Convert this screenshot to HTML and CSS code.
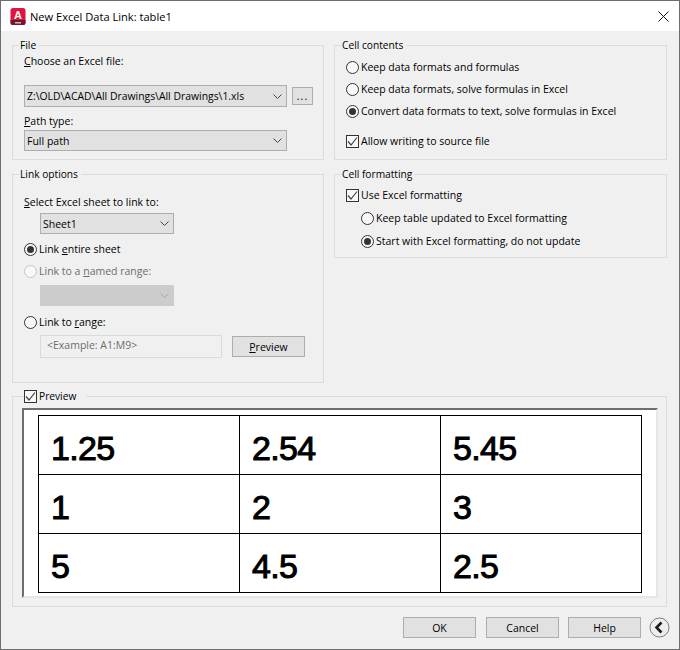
FILE: index.html
```html
<!DOCTYPE html>
<html lang="en">
<head>
  <meta charset="UTF-8">
  <title>New Excel Data Link: table1</title>
  <link rel="stylesheet" href="styles.css">
</head>
<body>
  <div class="window">
    <div class="titlebar">
      <svg class="app-icon" width="16" height="17" viewBox="0 0 16 17">
        <rect x="0.5" y="0" width="15" height="17" rx="2.5" fill="#e0143c"/>
        <path d="M0.5 12H15.5V14.5A2.5 2.5 0 0 1 13 17H3A2.5 2.5 0 0 1 0.5 14.5Z" fill="#6e1a2c"/>
        <rect x="5" y="14" width="6" height="1.5" fill="#d8b4bd"/>
        <text x="8" y="10.5" text-anchor="middle" class="app-letter">A</text>
      </svg>
      <span class="title">New Excel Data Link: table1</span>
      <svg class="close" width="11" height="11" viewBox="0 0 11 11">
        <path d="M0.5 0.5L10.5 10.5M10.5 0.5L0.5 10.5" stroke="#111" fill="none"/>
      </svg>
    </div>

    <div class="columns">
      <div class="stack">
        <fieldset class="group file-group">
          <legend>File</legend>
          <div class="label"><u>C</u>hoose an Excel file:</div>
          <div class="file-row">
            <div class="select file-select">
              <span>Z:\OLD\ACAD\All Drawings\All Drawings\1.xls</span>
              <svg class="chev" width="9" height="5" viewBox="0 0 9 5"><path d="M0.5 0.5L4.5 4.5L8.5 0.5" fill="none" stroke="#444"/></svg>
            </div>
            <div class="button dots">...</div>
          </div>
          <div class="label path-label"><u>P</u>ath type:</div>
          <div class="select path-select">
            <span>Full path</span>
            <svg class="chev" width="9" height="5" viewBox="0 0 9 5"><path d="M0.5 0.5L4.5 4.5L8.5 0.5" fill="none" stroke="#444"/></svg>
          </div>
        </fieldset>

        <fieldset class="group link-group">
          <legend>Link options</legend>
          <div class="label sheet-label"><u>S</u>elect Excel sheet to link to:</div>
          <div class="select sheet-select">
            <span>Sheet1</span>
            <svg class="chev" width="9" height="5" viewBox="0 0 9 5"><path d="M0.5 0.5L4.5 4.5L8.5 0.5" fill="none" stroke="#444"/></svg>
          </div>
          <div class="option link-entire"><span class="radio on"></span><span>Link <u>e</u>ntire sheet</span></div>
          <div class="option link-named disabled"><span class="radio"></span><span>Link to a <u>n</u>amed range:</span></div>
          <div class="select sheet-select named-select">
            <span></span>
            <svg class="chev" width="9" height="5" viewBox="0 0 9 5"><path d="M0.5 0.5L4.5 4.5L8.5 0.5" fill="none" stroke="#a8a8a8"/></svg>
          </div>
          <div class="option link-range"><span class="radio"></span><span>Link to <u>r</u>ange:</span></div>
          <div class="range-row">
            <div class="range-input">&lt;Example: A1:M9&gt;</div>
            <div class="button preview-btn"><span><u>P</u>review</span></div>
          </div>
        </fieldset>
      </div>

      <div class="stack">
        <fieldset class="group contents-group">
          <legend>Cell contents</legend>
          <div class="option"><span class="radio"></span><span>Keep data formats and formulas</span></div>
          <div class="option"><span class="radio"></span><span>Keep data formats, solve formulas in Excel</span></div>
          <div class="option"><span class="radio on"></span><span>Convert data formats to text, solve formulas in Excel</span></div>
          <div class="option allow-write">
            <span class="check"><svg width="11" height="11" viewBox="0 0 11 11"><path d="M1 5.5L4 9L10 1.5" fill="none" stroke="#444" stroke-width="1.2"/></svg></span>
            <span>Allow writing to source file</span>
          </div>
        </fieldset>

        <fieldset class="group format-group">
          <legend>Cell formatting</legend>
          <div class="option use-excel">
            <span class="check"><svg width="11" height="11" viewBox="0 0 11 11"><path d="M1 5.5L4 9L10 1.5" fill="none" stroke="#444" stroke-width="1.2"/></svg></span>
            <span>Use Excel formatting</span>
          </div>
          <div class="option sub-option"><span class="radio"></span><span>Keep table updated to Excel formatting</span></div>
          <div class="option sub-option"><span class="radio on"></span><span>Start with Excel formatting, do not update</span></div>
        </fieldset>
      </div>
    </div>

    <fieldset class="group preview-group">
      <legend>
        <span class="check"><svg width="11" height="11" viewBox="0 0 11 11"><path d="M1 5.5L4 9L10 1.5" fill="none" stroke="#444" stroke-width="1.2"/></svg></span>
        <span>Preview</span>
      </legend>
      <div class="preview-box">
        <div class="sheet">
          <div class="cell">1.25</div>
          <div class="cell">2.54</div>
          <div class="cell">5.45</div>
          <div class="cell">1</div>
          <div class="cell">2</div>
          <div class="cell">3</div>
          <div class="cell">5</div>
          <div class="cell">4.5</div>
          <div class="cell">2.5</div>
        </div>
      </div>
    </fieldset>

    <div class="footer">
      <div class="button action">OK</div>
      <div class="button action cancel">Cancel</div>
      <div class="button action help">Help</div>
      <svg class="collapse" width="21" height="21" viewBox="0 0 21 21">
        <circle cx="10.5" cy="10.5" r="9.5" fill="#eeeeee" stroke="#7d7d7d"/>
        <path d="M12.5 5.5L7.5 10.5L12.5 15.5" fill="none" stroke="#1c1c1c" stroke-width="2.6"/>
      </svg>
    </div>
  </div>
</body>
</html>
```

FILE: styles.css
```css
* {
  box-sizing: border-box;
}
body {
  margin: 0;
  font-family: "Open Sans", sans-serif;
  font-size: 10.5px;
  color: #000;
  background: #f0f0f0;
}
.window {
  width: 680px;
  height: 650px;
  border: 1px solid #6e6e6e;
  background: #f0f0f0;
}
.titlebar {
  height: 30px;
  background: white;
  display: flex;
  align-items: center;
  padding-left: 9px;
}
.app-icon {
  margin-right: 4px;
}
.app-letter {
  font-family: "Liberation Sans", sans-serif;
  font-size: 11px;
  font-weight: bold;
  fill: white;
}
.title {
  font-size: 11.1px;
}
.close {
  margin-left: auto;
  margin-right: 10px;
}
.columns {
  display: grid;
  grid-template-columns: 312px 333px;
  gap: 10px;
  padding: 7px 0 0 11px;
}
.stack {
  display: flex;
  flex-direction: column;
  gap: 7px;
}
.group {
  margin: 0;
  min-width: 0;
  border: 1px solid #dcdcdc;
  padding: 0 0 0 11px;
}
.group legend {
  height: 15px;
  line-height: 15px;
  font-size: 10.2px;
  margin-left: -5px;
  padding: 0 3px 0 1px;
}
.file-group, .contents-group {
  height: 122px;
}
.link-group {
  height: 216px;
}
.format-group {
  height: 91px;
}

.label {
  height: 16px;
  line-height: 16px;
}
.file-row {
  display: flex;
  align-items: center;
  gap: 5px;
  margin-top: 16px;
}
.path-label {
  margin-top: 6px;
}
.sheet-label {
  margin-top: 12px;
}

.select {
  height: 21px;
  background: #e1e1e1;
  border: 1px solid #adadad;
  display: flex;
  align-items: center;
  justify-content: space-between;
  padding: 0 4px 0 2px;
  width: 263px;
}
.file-select {
  height: 22px;
  font-size: 10.4px;
}
.path-select {
  margin-top: 1px;
}
.sheet-select {
  width: 134px;
  margin: 3px 0 0 16px;
}
.named-select {
  margin-top: 6px;
  background: #cccccc;
  border-color: #cccccc;
}

.button {
  background: #e1e1e1;
  border: 1px solid #adadad;
  height: 21px;
  display: flex;
  align-items: center;
  justify-content: center;
}
.dots {
  width: 21px;
  height: 18px;
  letter-spacing: 1px;
}
.action {
  width: 73px;
}

.option {
  height: 16px;
  line-height: 16px;
  display: flex;
  align-items: center;
  margin-top: 6px;
}
.disabled {
  color: #6d6d6d;
}
.link-entire {
  margin-top: 7px;
}
.link-range {
  margin-top: 8px;
}
.allow-write {
  margin-top: 14px;
}
.use-excel {
  margin-top: 5px;
}
.sub-option {
  margin: 7px 0 0 15px;
}
.radio {
  width: 13px;
  height: 13px;
  border: 1px solid #333;
  border-radius: 50%;
  margin-right: 2px;
  flex: none;
  background: #f8f8f8;
  position: relative;
}
.disabled .radio {
  border-color: #c4c4c4;
}
.radio.on::after {
  content: "";
  position: absolute;
  left: 2px;
  top: 2px;
  width: 7px;
  height: 7px;
  border-radius: 50%;
  background: #333;
}
.check {
  width: 13px;
  height: 13px;
  border: 1px solid #333;
  margin-right: 2px;
  flex: none;
  background: #f8f8f8;
  display: inline-flex;
}
.range-row {
  display: flex;
  align-items: center;
  margin: 5px 0 0 16px;
}
.range-input {
  width: 182px;
  height: 23px;
  line-height: 19px;
  padding-left: 6px;
  border: 1px solid #dadada;
  color: #6d6d6d;
}
.preview-btn {
  width: 73px;
  margin-left: 10px;
}

.preview-group {
  width: 655px;
  height: 218px;
  margin: 6px 0 0 11px;
  padding-left: 9px;
}
.preview-group legend {
  display: flex;
  align-items: center;
  margin-left: 2px;
  padding: 0 10px 0 0;
}
.preview-box {
  width: 636px;
  height: 190px;
  margin-top: 4px;
  background: white;
  border-style: solid;
  border-width: 2px;
  border-color: #6e6e6e #e6e6e6 #e6e6e6 #6e6e6e;
  padding: 5px 0 0 14px;
}
.sheet {
  display: grid;
  grid-template-columns: repeat(3, 201px);
  grid-template-rows: repeat(3, 59px);
  width: 604px;
  border-top: 1px solid black;
  border-left: 1px solid black;
}
.cell {
  border-right: 1px solid black;
  border-bottom: 1px solid black;
  font-family: "Liberation Sans", sans-serif;
  font-size: 34px;
  -webkit-text-stroke: 1px black;
  letter-spacing: -0.7px;
  line-height: 58px;
  padding: 3px 0 0 12px;
}

.footer {
  display: flex;
  align-items: center;
  justify-content: flex-end;
  margin-top: 10px;
  padding-right: 9px;
}
.footer .cancel {
  margin: 0 9px 0 10px;
}
.collapse {
  margin-left: 8px;
}
```
